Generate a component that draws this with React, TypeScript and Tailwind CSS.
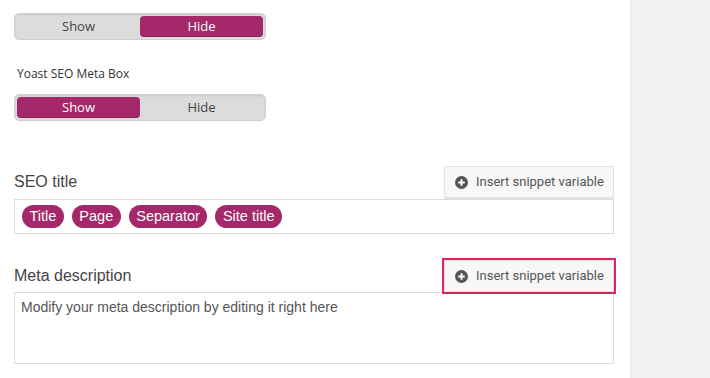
import React from 'react';

function Toggle({ active }: { active: 'show' | 'hide' }) {
  const on = 'bg-[#a4286a] text-white shadow-[inset_0_-1px_0_rgba(0,0,0,0.2)]';
  const off = 'text-[#444]';
  return (
    <div className="flex w-[252px] h-[27px] p-[2px] rounded-[5px] bg-[#dcdcdc] border border-[#cfcfcf] shadow-[inset_0_1px_2px_rgba(0,0,0,0.08)] font-['Open_Sans',sans-serif] text-[13px]">
      <div className={`flex-1 flex items-center justify-center rounded-[4px] ${active === 'show' ? on : off}`}>Show</div>
      <div className={`flex-1 flex items-center justify-center rounded-[4px] ${active === 'hide' ? on : off}`}>Hide</div>
    </div>
  );
}

function PlusIcon() {
  return (
    <svg width="13" height="13" viewBox="0 0 16 16" className="shrink-0">
      <circle cx="8" cy="8" r="8" fill="#555" />
      <path d="M8 4v8M4 8h8" stroke="#fff" strokeWidth="2.4" />
    </svg>
  );
}

function InsertButton({ focused }: { focused?: boolean }) {
  return (
    <div className={focused ? 'border-2 border-[#e2265a] -m-[2px]' : ''}>
      <button className="flex items-center gap-[8px] h-[32px] w-[170px] pl-[10px] bg-[#f7f7f7] border border-[#e1e1e1] rounded-[2px] shadow-[0_1px_1px_rgba(0,0,0,0.12)] font-['Roboto',sans-serif] text-[13px] text-[#555]">
        <PlusIcon />
        <span>Insert snippet variable</span>
      </button>
    </div>
  );
}

export default function App() {
  const pills = ['Title', 'Page', 'Separator', 'Site title'];
  return (
    <div className="flex w-[710px] h-[378px] bg-white overflow-hidden font-['Liberation_Sans',Arial,sans-serif]">
      <div className="w-[630px] pl-[14px] pr-[16px] pt-[13px]">
        <Toggle active="hide" />
        <div className="mt-[25px] ml-[3px] font-['Open_Sans',sans-serif] text-[12px] text-[#333]">Yoast SEO Meta Box</div>
        <div className="mt-[11px]">
          <Toggle active="show" />
        </div>

        <div className="mt-[45px] flex items-center justify-between">
          <span className="text-[16px] text-[#444]">SEO title</span>
          <InsertButton />
        </div>
        <div className="mt-[1px] h-[35px] border border-[#dddddd] flex items-center gap-[8px] px-[7px]">
          {pills.map((p) => (
            <span key={p} className="h-[23px] flex items-center px-[7.5px] rounded-full bg-[#a4286a] text-white text-[14.5px]">
              {p}
            </span>
          ))}
        </div>

        <div className="mt-[26px] flex items-center justify-between">
          <span className="text-[16px] text-[#444]">Meta description</span>
          <InsertButton focused />
        </div>
        <div className="h-[72px] border border-[#dddddd] px-[6px] pt-[4px] text-[14px] text-[#555]">
          Modify your meta description by editing it right here
        </div>
      </div>
      <div className="flex-1 bg-[#f1f1f1] border-l border-[#e6e6e6]" />
    </div>
  );
}
